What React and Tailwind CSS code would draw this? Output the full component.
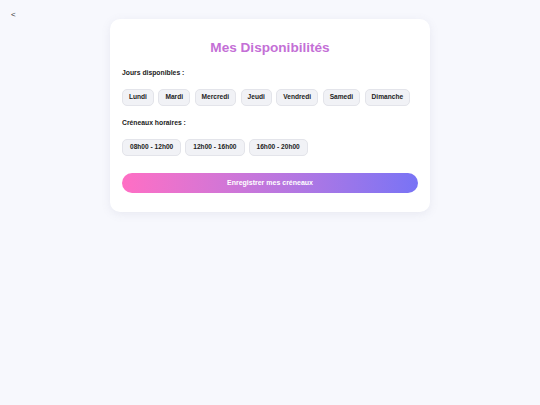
export default function App() {
  const days = ["Lundi", "Mardi", "Mercredi", "Jeudi", "Vendredi", "Samedi", "Dimanche"];
  const slots = ["08h00 - 12h00", "12h00 - 16h00", "16h00 - 20h00"];
  const chip =
    "h-[17px] rounded-[5px] bg-[#f1f2f6] border border-[#e3e4ea] text-[6.6px] font-bold text-[#222] leading-none flex items-center";
  return (
    <div
      className="relative min-h-[405px] w-full bg-[#f7f8fd] pt-[19px]"
      style={{ fontFamily: '"Liberation Sans", Arial, sans-serif' }}
    >
      <span className="absolute left-[11px] top-[11px] text-[8px] text-[#333] leading-none">&lt;</span>
      <div className="mx-auto w-[320px] bg-white rounded-[10px] shadow-[0_2px_10px_rgba(120,120,160,0.12)] px-[12px] pt-[19px] pb-[19px]">
        <h1 className="text-center text-[13.6px] leading-[20px] font-bold text-[#c46fd6]">Mes Disponibilités</h1>
        <div className="mt-[10px] text-[6.8px] leading-[9px] font-bold text-[#222]">Jours disponibles :</div>
        <div className="mt-[12px] flex gap-[4.5px]">
          {days.map((d) => (
            <div key={d} className={chip + " px-[6px]"}>{d}</div>
          ))}
        </div>
        <div className="mt-[12px] text-[6.8px] leading-[9px] font-bold text-[#222]">Créneaux horaires :</div>
        <div className="mt-[12px] flex gap-[4px]">
          {slots.map((s) => (
            <div key={s} className={chip + " px-[7px]"}>{s}</div>
          ))}
        </div>
        <button className="mt-[17px] w-full h-[20px] rounded-full bg-gradient-to-r from-[#ff6ec4] to-[#7873f5] text-white text-[7px] font-bold flex items-center justify-center">
          Enregistrer mes créneaux
        </button>
      </div>
    </div>
  );
}
